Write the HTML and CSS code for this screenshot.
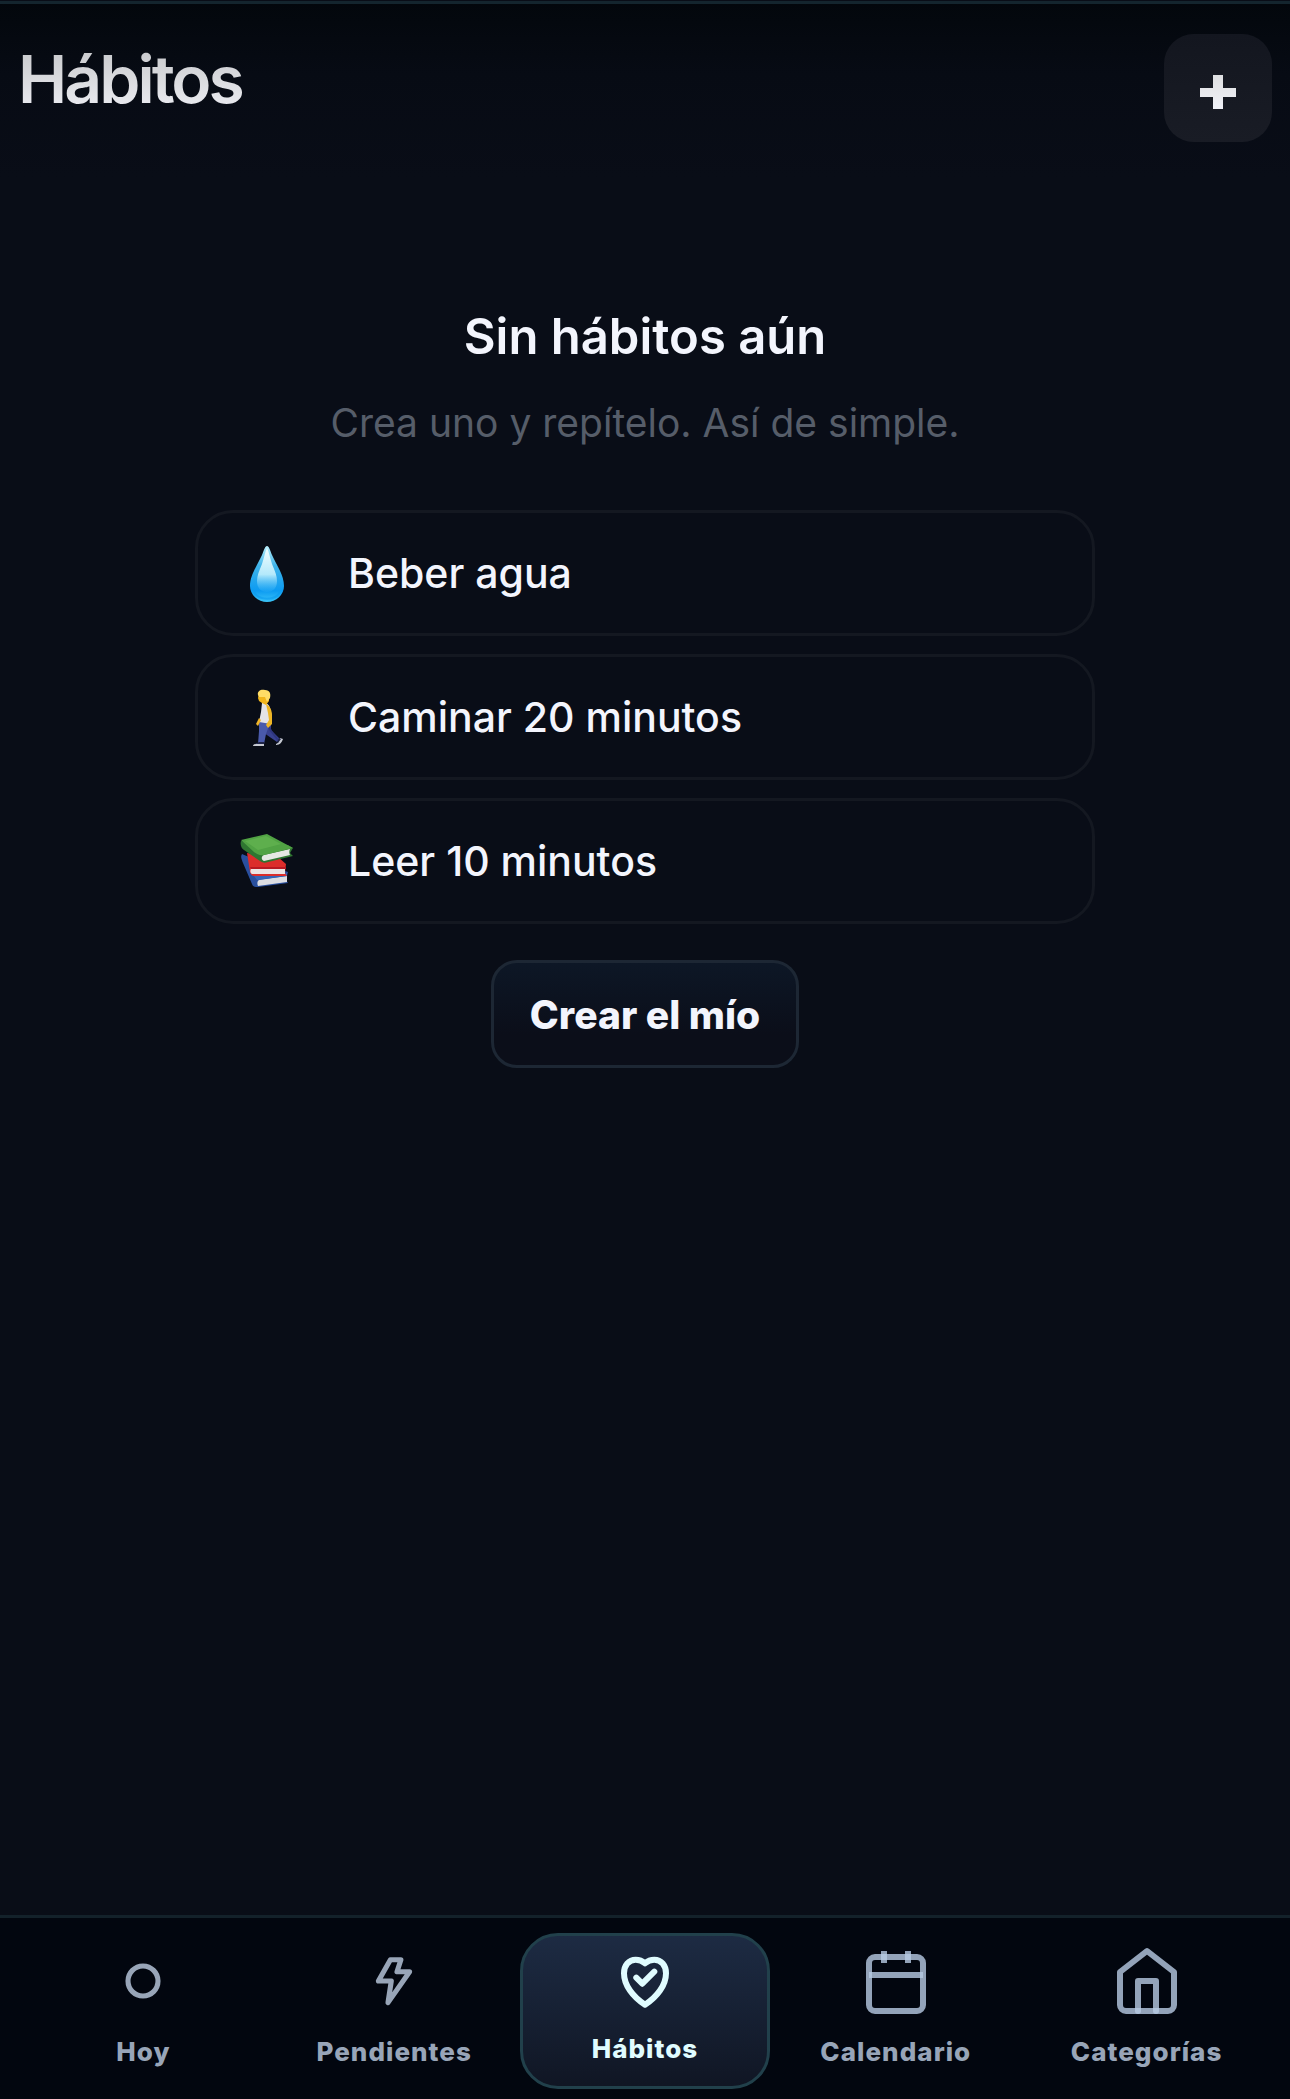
FILE: index.html
```html
<!DOCTYPE html>
<html lang="es">
<head>
  <meta charset="UTF-8" />
  <meta name="viewport" content="width=device-width, initial-scale=1" />
  <title>Hábitos</title>
  <link rel="stylesheet" href="styles.css">
</head>
<body>

<header class="cabecera">
  <h1>Hábitos</h1>
  <button type="button" class="boton-mas" aria-label="Crear hábito">
    <svg viewBox="0 0 36 44" aria-hidden="true">
      <path d="M13 9h10v13h13v9H23v12H13V31H0v-9h13z" fill="url(#brillo)" />
      <defs>
        <linearGradient id="brillo" x1="0" y1="0" x2="0" y2="1">
          <stop offset="0" stop-color="#dedfe1" />
          <stop offset="1" stop-color="#f0f1f7" />
        </linearGradient>
      </defs>
    </svg>
  </button>
</header>

<main>
  <h2>Sin hábitos aún</h2>
  <p class="ayuda">Crea uno y repítelo. Así de simple.</p>

  <div class="sugerencias">
    <button type="button" class="sugerencia">
      <svg class="emoji" viewBox="0 0 60 60" aria-hidden="true">
        <defs>
          <linearGradient id="gota" x1="0" y1="0" x2="0" y2="1">
            <stop offset="0" stop-color="#b9f0fd" />
            <stop offset="0.35" stop-color="#3fb4ea" />
            <stop offset="0.8" stop-color="#0c9bf2" />
            <stop offset="1" stop-color="#3bc4f8" />
          </linearGradient>
          <linearGradient id="gotaLuz" x1="0" y1="0" x2="0" y2="1">
            <stop offset="0" stop-color="#f4feff" />
            <stop offset="0.6" stop-color="#b4e9fb" />
            <stop offset="1" stop-color="#35b4f8" stop-opacity="0.2" />
          </linearGradient>
        </defs>
        <path d="M30 3C28 3 27 7 25 12 20 23 13 32 13 43a17 16 0 0 0 34 0C47 32 40 23 35 12 33 7 32 3 30 3z" fill="url(#gota)" />
        <path d="M30 5C28 9 27 15 25 21 22 28 20 33 20 38c0 7 4 11 10 11s10-4 10-11c0-5-2-10-5-17C33 15 32 9 30 5z" fill="url(#gotaLuz)" />
        <path d="M17 49c4 9 22 9 26 0" fill="none" stroke="#0a9bf0" stroke-width="2" opacity="0.6" />
      </svg>
      <span>Beber agua</span>
    </button>

    <button type="button" class="sugerencia">
      <svg class="emoji" viewBox="0 0 60 60" aria-hidden="true">
        <path d="M26 34 34 34 34 43 43 52 40 55 27 46z" fill="#38418f" />
        <path d="M22 33h12l-5 14-2 10h-6l1-13z" fill="#4a5aab" />
        <path d="M31 38 34 44 41 53" stroke="#2e3680" stroke-width="2" fill="none" />
        <path d="M16 59c0-2 4-2 5-3h6v3zM39 57c3-1 3-4 4-6l3 1c-1 3-3 6-7 6z" fill="#c6c9d2" />
        <path d="M18 57l4-2h5v2zM40 55l2-4 2 1-3 4z" fill="#1e2448" />
        <path d="M25 16c4-1 7 1 8 5l2 8-1 8-12-2 2-10z" fill="#e4e3e7" />
        <path d="M29 17c4 2 6 6 6 12v8l-4 4-2-3 3-5-1-7z" fill="#eeb525" />
        <path d="M22 31l-3 6 2 2 3-6z" fill="#f0b429" />
        <path d="M22 7l10-2v9l-3 4-4-2-3-2-1-3z" fill="#f2b51c" />
        <path d="M21 8c-1-4 3-6 7-5 5 0 6 4 5 8l-3 4-2-5-6 0z" fill="#ffdc66" />
      </svg>
      <span>Caminar 20 minutos</span>
    </button>

    <button type="button" class="sugerencia">
      <svg class="emoji" viewBox="0 0 60 60" aria-hidden="true">
        <path d="M5 23C3 26 5 29 6 32l9 21c1 3 3 3 6 3l30-4-2-3 2-8-23-8z" fill="#294f9e" />
        <path d="M22 49l28-4v6l-29 4c-1-2-1-5 1-6z" fill="#dcdde2" />
        <path d="M17 45l33-3v3l-30 4z" fill="#3764b7" />
        <path d="M10 22l3 19c1 4 3 4 6 4h31l-2-3 1-9-8-7z" fill="#dc2d2b" />
        <path d="M14 38h34v5H15c-2-1-2-4-1-5z" fill="#ece4e4" />
        <path d="M13 36h36v2H14z" fill="#b81922" />
        <path d="M4 10C3 13 4 17 7 19l16 11c3 2 5 2 8 1l25-6-3-3 3-5-5-3z" fill="#2f7631" />
        <path d="M27 24l26-6c-1 2-1 4 0 6l-26 6c-3-1-3-5 0-6z" fill="#e5e8e2" />
        <path d="M4 9 30 3 56 17 27 24C23 25 20 23 17 21z" fill="#51a344" />
        <path d="M8 10 29 5 44 13 21 19z" fill="#68b854" opacity="0.6" />
      </svg>
      <span>Leer 10 minutos</span>
    </button>
  </div>

  <button type="button" class="boton">Crear el mío</button>
</main>

<nav class="barra">
  <a href="#hoy">
    <svg viewBox="0 0 24 24" aria-hidden="true"><circle cx="12" cy="12" r="5" /></svg>
    <span>Hoy</span>
  </a>
  <a href="#pendientes">
    <svg viewBox="0 0 24 24" aria-hidden="true"><path d="M10.8 4.9h3.5L13 8.9h4.2L10 19.2 11.1 12H6.8z" /></svg>
    <span>Pendientes</span>
  </a>
  <a href="#habitos" class="activo" aria-current="page">
    <svg viewBox="0 0 24 24" aria-hidden="true">
      <path d="M12 7.1C11 6.2 10 5.9 8.9 5.9 6.6 5.9 5 7.8 5 10.4c0 4 3 7.9 7 10.5 4-2.6 7-6.5 7-10.5 0-2.6-1.6-4.500-3.900-4.500-1.100 0-2.100.3-3.100 1.200z" />
      <path d="M9.1 11.900l2 2 4-4" />
    </svg>
    <span>Hábitos</span>
  </a>
  <a href="#calendario">
    <svg class="grande" viewBox="0 0 24 24" aria-hidden="true">
      <rect x="3" y="4" width="18" height="18" rx="2" />
      <path class="recto" d="M8 2v4" />
      <path class="recto" d="M16 2v4" />
      <path class="recto" d="M3 10h18" />
    </svg>
    <span>Calendario</span>
  </a>
  <a href="#categorias">
    <svg class="grande" viewBox="0 0 24 24" aria-hidden="true">
      <path d="M3 9l9-7 9 7v11a2 2 0 0 1-2 2H5a2 2 0 0 1-2-2z" />
      <path d="M9 22V12h6v10" />
    </svg>
    <span>Categorías</span>
  </a>
</nav>

</body>
</html>
```
FILE: styles.css
```css
* { box-sizing: border-box; }
body {
  font-family: Inter, "Liberation Sans", sans-serif;
  margin: 0;
  min-height: 100vh;
  padding-top: 1px;
  display: flex;
  flex-direction: column;
  background-color: #090d17;
  color: #f3f5fd;
}
h1, h2, p { margin: 0; }
button {
  font-family: inherit;
  color: inherit;
  cursor: pointer;
}
.cabecera {
  display: flex;
  justify-content: space-between;
  align-items: flex-start;
  padding: 30px 18px 36px;
  border-top: 3px solid #14252e;
  background: linear-gradient(#03070c, #070b14 40%, #090d17);
}
.cabecera h1 {
  font-size: 66px;
  line-height: 90px;
  font-weight: 600;
  letter-spacing: -0.045em;
  background: linear-gradient(#c0c1c3, #f3f4fa);
  background-clip: text;
  -webkit-background-clip: text;
  color: transparent;
}
.boton-mas {
  width: 108px;
  height: 108px;
  display: flex;
  align-items: center;
  justify-content: center;
  padding: 0;
  border: none;
  border-radius: 30px;
  background: linear-gradient(#13161f, #191c25);
}
.boton-mas svg {
  width: 36px;
  height: 44px;
}
main {
  flex: 1;
  display: flex;
  flex-direction: column;
  align-items: center;
  padding: 126px 18px 36px;
}
h2 {
  font-size: 49px;
  line-height: 66px;
  font-weight: 600;
}
.ayuda {
  margin-top: 26px;
  font-size: 39px;
  line-height: 54px;
  color: #565d69;
}
.sugerencias {
  width: 100%;
  max-width: 900px;
  margin-top: 60px;
  display: flex;
  flex-direction: column;
  gap: 18px;
}
.sugerencia {
  display: flex;
  align-items: center;
  gap: 51px;
  height: 126px;
  padding: 0 39px;
  border: 3px solid #141821;
  border-radius: 38px;
  background: none;
  font-size: 41px;
  font-weight: 500;
  text-align: left;
}
.emoji {
  width: 60px;
  height: 60px;
  flex: none;
}
.boton {
  height: 108px;
  margin-top: 36px;
  padding: 0 36px;
  border: 3px solid #1d2734;
  border-radius: 26px;
  background: linear-gradient(#0d1726, #0b0e19 70%);
  font-size: 39px;
  font-weight: 800;
}
.barra {
  position: sticky;
  bottom: 0;
  display: grid;
  grid-template-columns: repeat(5, 1fr);
  padding: 15px 18px 10px;
  border-top: 3px solid #13212a;
  background-color: #02060f;
}
.barra a {
  display: flex;
  flex-direction: column;
  align-items: center;
  gap: 17px;
  padding: 9px 0 16px;
  border: 3px solid transparent;
  color: #98a5b8;
  text-decoration: none;
}
.barra svg {
  width: 72px;
  height: 72px;
  fill: none;
  stroke: currentColor;
  stroke-width: 1.7;
  stroke-linecap: round;
  stroke-linejoin: round;
}
.barra .grande {
  stroke: rgba(184, 202, 228, 0.8);
  stroke-width: 2;
}
.barra .recto { stroke-linecap: butt; }
.barra span {
  font-size: 26px;
  line-height: 36px;
  font-weight: 800;
  letter-spacing: 0.04em;
}
.barra .activo {
  padding: 6px 0 19px;
  border-color: #21404b;
  border-radius: 38px;
  background: linear-gradient(#1d2b43, #101624);
  color: #e0fcff;
}
.activo svg { stroke-width: 2; }
```
